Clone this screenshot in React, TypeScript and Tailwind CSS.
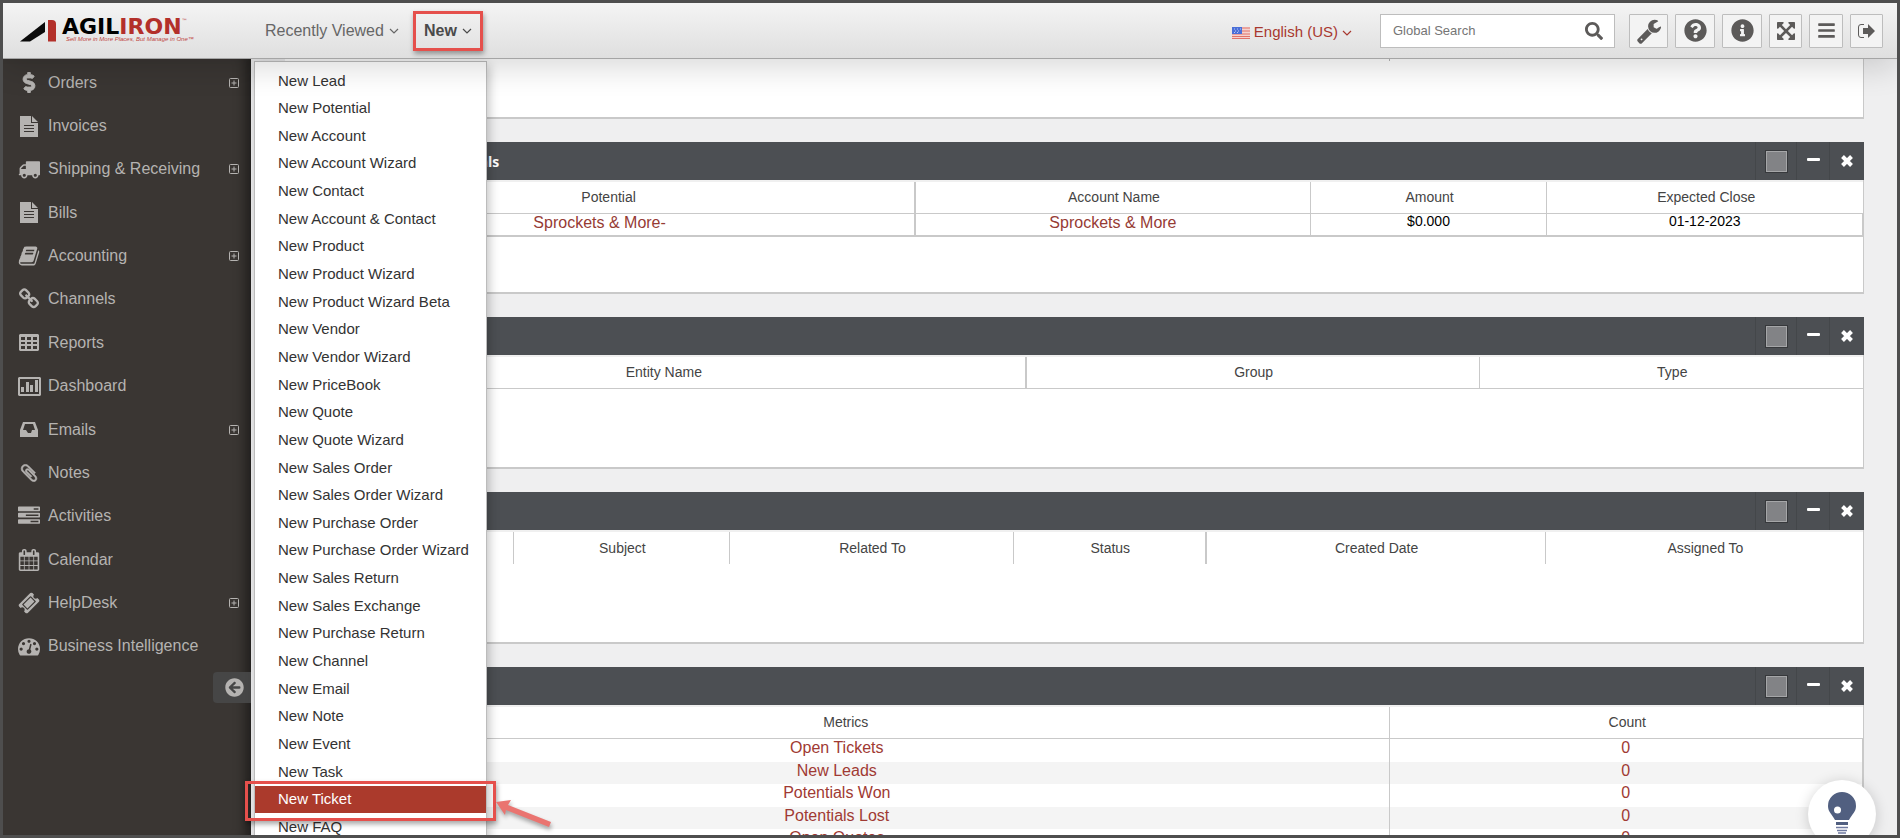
import React from 'react';
import clsx from 'clsx';
import { FaArrowCircleLeft, FaBars, FaDollarSign, FaInfoCircle, FaQuestionCircle, FaSearch } from 'react-icons/fa';

const bookPath =
  'M1703 478q40 57 18 129l-275 906q-19 64-76.5 107.5t-122.5 43.5h-923q-77 0-148.5-53.5t-99.5-131.5q-24-67-2-127 0-4 3-27t4-37q1-8-3-21.5t-3-19.5q2-11 8-21t16.5-23.5 16.5-23.5q23-38 45-91.5t30-91.5q3-10 .5-30t-.5-28q3-11 17-28t17-23q21-36 42-92t25-90q1-9-2.5-32t.5-28q4-13 22-30.5t22-22.5q19-26 42.5-84.5t27.5-96.5q1-8-3-25.5t-2-26.5q2-8 9-18t18-23 17-21q8-12 16.5-30.5t15-35 16-36 19.5-32 26.5-23.5 36-11.5 47.5 5.5l-1 3q38-9 51-9h761q74 0 114 56t18 130l-274 906q-36 119-71.5 153.5t-128.5 34.5h-869q-27 0-38 15-11 16-1 43 24 70 144 70h923q29 0 56-15.5t35-41.5l300-987q7-22 5-57 38 15 59 43zm-1064 2q-4 13 2 22.5t20 9.5h608q13 0 25.5-9.5t16.5-22.5l21-64q4-13-2-22.5t-20-9.5h-608q-13 0-25.5 9.5t-16.5 22.5zm-83 256q-4 13 2 22.5t20 9.5h608q13 0 25.5-9.5t16.5-22.5l21-64q4-13-2-22.5t-20-9.5h-608q-13 0-25.5 9.5t-16.5 22.5z';
const chainPath =
  'M1520 1216q0-40-28-68l-208-208q-28-28-68-28-42 0-72 32 3 3 19 18.5t21.5 21.5 15 19 13 25.5 3.5 27.5q0 40-28 68t-68 28q-15 0-27.5-3.5t-25.5-13-19-15-21.5-21.5-18.5-19q-33 31-33 73 0 40 28 68l206 207q27 27 68 27 40 0 68-26l147-146q28-28 28-67zm-703-705q0-40-28-68l-206-207q-28-28-68-28-39 0-68 27l-147 146q-28 28-28 67 0 40 28 68l208 208q27 27 68 27 42 0 72-31-3-3-19-18.5t-21.5-21.5-15-19-13-25.5-3.5-27.5q0-40 28-68t68-28q15 0 27.5 3.5t25.5 13 19 15 21.5 21.5 18.5 19q33-31 33-73zm895 705q0 120-85 203l-147 146q-83 83-203 83-121 0-204-85l-206-207q-83-83-83-203 0-123 88-209l-88-88q-86 88-208 88-120 0-204-84l-208-208q-84-84-84-204t85-203l147-146q83-83 203-83 121 0 204 85l206 207q83 83 83 203 0 123-88 209l88 88q86-88 208-88 120 0 204 84l208 208q84 84 84 204z';
const calendarPath =
  'M192 1664h288v-288h-288v288zm352 0h320v-288h-320v288zm-352-352h288v-320h-288v320zm352 0h320v-320h-320v320zm-352-384h288v-288h-288v288zm736 736h320v-288h-320v288zm-384-736h320v-288h-320v288zm768 736h288v-288h-288v288zm-384-352h320v-320h-320v320zm-352-864v-288q0-13-9.5-22.5t-22.5-9.5h-64q-13 0-22.5 9.5t-9.5 22.5v288q0 13 9.5 22.5t22.5 9.5h64q13 0 22.5-9.5t9.5-22.5zm736 864h288v-320h-288v320zm-384-384h320v-288h-320v288zm384 0h288v-288h-288v288zm32-480v-288q0-13-9.5-22.5t-22.5-9.5h-64q-13 0-22.5 9.5t-9.5 22.5v288q0 13 9.5 22.5t22.5 9.5h64q13 0 22.5-9.5t9.5-22.5zm384-64v1280q0 52-38 90t-90 38h-1408q-52 0-90-38t-38-90v-1280q0-52 38-90t90-38h128v-96q0-66 47-113t113-47h64q66 0 113 47t47 113v96h384v-96q0-66 47-113t113-47h64q66 0 113 47t47 113v96h128q52 0 90 38t38 90z';
const ticketPath =
  'M1024 452l316 316-572 572-316-316zm-211 979l618-618q19-19 19-45t-19-45l-362-362q-18-18-45-18t-45 18l-618 618q-19 19-19 45t19 45l362 362q18 18 45 18t45-18zm889-637l-907 908q-37 37-90.5 37t-90.5-37l-126-126q56-56 56-136t-56-136-136-56-136 56l-125-126q-37-37-37-90.5t37-90.5l907-906q37-37 90.5-37t90.5 37l125 125q-56 56-56 136t56 136 136 56 136-56l126 125q37 37 37 90.5t-37 90.5z';
const wrenchPath =
  'M448 1472q0-26-19-45t-45-19-45 19-19 45 19 45 45 19 45-19 19-45zm644-420l-682 682q-37 37-90 37-52 0-91-37l-106-108q-38-36-38-90 0-53 38-91l681-681q39 98 114.5 173.5t173.5 114.5zm634-435q0 39-23 106-47 134-164.5 217.5t-258.5 83.5q-185 0-316.5-131.5t-131.5-316.5 131.5-316.5 316.5-131.5q58 0 121.5 16.5t107.5 46.5q16 11 16 28t-16 28l-293 169v224l193 107q5-3 79-48.5t135.5-81 70.5-35.5q15 0 23.5 10t8.5 25z';
const clipPath =
  'M1596 1385q0 117-79 196t-196 79q-135 0-235-100l-777-776q-113-115-113-271 0-159 110-270t269-111q158 0 273 113l605 606q10 10 10 22 0 16-30.5 46.5t-46.5 30.5q-13 0-23-10l-606-607q-79-77-181-77-106 0-179 75t-73 181q0 105 76 181l776 777q63 63 145 63 64 0 106-42t42-106q0-82-63-145l-581-581q-26-24-60-24-29 0-48 19t-19 48q0 32 25 59l410 410q10 10 10 22 0 16-31 47t-47 31q-12 0-22-10l-410-410q-63-61-63-149 0-82 57-139t139-57q88 0 149 63l581 581q100 98 100 235z';
const gaugePath =
  'M384 1152q0-53-37.5-90.5t-90.5-37.5-90.5 37.5-37.5 90.5 37.5 90.5 90.5 37.5 90.5-37.5 37.5-90.5zm192-448q0-53-37.5-90.5t-90.5-37.5-90.5 37.5-37.5 90.5 37.5 90.5 90.5 37.5 90.5-37.5 37.5-90.5zm428 481l101-382q6-26-7.5-48.5t-38.5-29.5-48 6.5-30 39.5l-101 382q-60 5-107 43.5t-63 98.5q-20 77 20 146t117 89 146-20 89-117q16-60-6-117t-72-91zm660-33q0-53-37.5-90.5t-90.5-37.5-90.5 37.5-37.5 90.5 37.5 90.5 90.5 37.5 90.5-37.5 37.5-90.5zm-640-640q0-53-37.5-90.5t-90.5-37.5-90.5 37.5-37.5 90.5 37.5 90.5 90.5 37.5 90.5-37.5 37.5-90.5zm448 192q0-53-37.5-90.5t-90.5-37.5-90.5 37.5-37.5 90.5 37.5 90.5 90.5 37.5 90.5-37.5 37.5-90.5zm320 448q0 261-141 483-19 29-54 29h-1402q-35 0-54-29-141-221-141-483 0-182 71-348t191-286 286-191 348-71 348 71 286 191 191 286 71 348z';
const tasksPath =
  'M1024 1408h640v-128h-640v128zm-384-512h1024v-128h-1024v128zm640-512h384v-128h-384v128zm512 832v256q0 26-19 45t-45 19h-1664q-26 0-45-19t-19-45v-256q0-26 19-45t45-19h1664q26 0 45 19t19 45zm0-512v256q0 26-19 45t-45 19h-1664q-26 0-45-19t-19-45v-256q0-26 19-45t45-19h1664q26 0 45 19t19 45zm0-512v256q0 26-19 45t-45 19h-1664q-26 0-45-19t-19-45v-256q0-26 19-45t45-19h1664q26 0 45 19t19 45z';
const arrowsPath =
  'M1283 413l-355 355 355 355 144-144q29-31 70-14 39 17 39 59v448q0 26-19 45t-45 19h-448q-42 0-59-40-17-39 14-69l144-144-355-355-355 355 144 144q31 30 14 69-17 40-59 40h-448q-26 0-45-19t-19-45v-448q0-42 40-59 39-17 69 14l144 144 355-355-355-355-144 144q-19 19-45 19-12 0-24-5-40-17-40-59v-448q0-26 19-45t45-19h448q42 0 59 40 17 39-14 69l-144 144 355 355 355-355-144-144q-31-30-14-69 17-40 59-40h448q26 0 45 19t19 45v448q0 42-39 59-13 5-25 5-26 0-45-19z';
const truckPath =
  'M640 1408q0-52-38-90t-90-38-90 38-38 90 38 90 90 38 90-38 38-90zm-384-512h384v-256h-158q-13 0-22 9l-195 195q-9 9-9 22v30zm1280 512q0-52-38-90t-90-38-90 38-38 90 38 90 90 38 90-38 38-90zm256-1088v1024q0 15-4 26.5t-13.5 18.5-16.5 11.5-23.5 6-22.5 2-25.5 0-22.5-.5q0 106-75 181t-181 75-181-75-75-181h-384q0 106-75 181t-181 75-181-75-75-181h-64q-3 0-22.5.5t-25.5 0-22.5-2-23.5-6-16.5-11.5-13.5-18.5-4-26.5q0-26 19-45t45-19v-320q0-8-.5-35t0-38 2.5-34.5 6.5-37 14-30.5 22.5-30l198-198q19-19 50.5-32t58.5-13h160v-192q0-26 19-45t45-19h1024q26 0 45 19t19 45z';

function Glyph({ d, viewBox = '0 0 1792 1792', className }: { d: string; viewBox?: string; className: string }) {
  return (
    <svg viewBox={viewBox} className={className} fill="currentColor" fillRule="evenodd" aria-hidden="true">
      <path d={d} />
    </svg>
  );
}

const FileIcon = () => (
  <Glyph
    viewBox="0 0 18 21"
    className="h-[21px] w-[18px]"
    d="M0 0h11v7h7v14H0zM12 0l6 6h-6zM4 9h10v1H4zM4 12h10v1H4zM4 15h10v1H4z"
  />
);

const sidebar = [
  { label: 'Orders', icon: <FaDollarSign className="h-[21px] w-5" stroke="currentColor" strokeWidth="24" />, more: true },
  { label: 'Invoices', icon: <FileIcon /> },
  { label: 'Shipping & Receiving', icon: <Glyph d={truckPath} className="h-[22px] w-[22px]" />, more: true },
  { label: 'Bills', icon: <FileIcon /> },
  { label: 'Accounting', icon: <Glyph d={bookPath} className="h-[22px] w-[22px]" />, more: true },
  { label: 'Channels', icon: <Glyph d={chainPath} className="h-[22px] w-[22px]" /> },
  {
    label: 'Reports',
    icon: (
      <Glyph
        viewBox="0 0 20 17"
        className="h-[17px] w-5"
        d="M1 0h18l1 1v15l-1 1H1l-1-1V1zM2 3h4v3H2zM8 3h4v3H8zM14 3h4v3h-4zM2 8h4v2H2zM8 8h4v2H8zM14 8h4v2h-4zM2 12h4v3H2zM8 12h4v3H8zM14 12h4v3h-4z"
      />
    ),
  },
  {
    label: 'Dashboard',
    icon: (
      <Glyph
        viewBox="0 0 23 19"
        className="h-[19px] w-[23px]"
        d="M1 0h21l1 1v17l-1 1H1l-1-1V1zM2 2v15h19V2zM3 10h3v5H3zM8 5h3v10H8zM12 8h3v7h-3zM17 3h3v12h-3z"
      />
    ),
  },
  {
    label: 'Emails',
    icon: (
      <Glyph viewBox="0 0 18 15" className="h-[15px] w-[18px]" d="M3 0h12l3 8v7H0V8zM5 2L3 8h3l2 3h3l1-3h3l-2-6z" />
    ),
    more: true,
  },
  { label: 'Notes', icon: <Glyph d={clipPath} className="h-5 w-5 stroke-current stroke-[60]" /> },
  { label: 'Activities', icon: <Glyph d={tasksPath} className="h-[22px] w-[22px]" /> },
  { label: 'Calendar', icon: <Glyph d={calendarPath} className="h-[22px] w-[22px]" /> },
  { label: 'HelpDesk', icon: <Glyph d={ticketPath} className="h-[22px] w-[22px]" />, more: true },
  { label: 'Business Intelligence', icon: <Glyph d={gaugePath} className="h-[22px] w-[22px]" /> },
];

const newItems = [
  'New Lead',
  'New Potential',
  'New Account',
  'New Account Wizard',
  'New Contact',
  'New Account & Contact',
  'New Product',
  'New Product Wizard',
  'New Product Wizard Beta',
  'New Vendor',
  'New Vendor Wizard',
  'New PriceBook',
  'New Quote',
  'New Quote Wizard',
  'New Sales Order',
  'New Sales Order Wizard',
  'New Purchase Order',
  'New Purchase Order Wizard',
  'New Sales Return',
  'New Sales Exchange',
  'New Purchase Return',
  'New Channel',
  'New Email',
  'New Note',
  'New Event',
  'New Task',
  'New Ticket',
  'New FAQ',
];

type Column = { label: string; width: string; thick?: boolean };

const potentialColumns: Column[] = [
  { label: 'Potential', width: 'w-[40%]', thick: true },
  { label: 'Account Name', width: 'w-[25%]' },
  { label: 'Amount', width: 'w-[15%]' },
  { label: 'Expected Close', width: 'w-[20%]' },
];
const groupColumns: Column[] = [
  { label: 'Entity Name', width: 'w-[47%]', thick: true },
  { label: 'Group', width: 'w-[28.7%]' },
  { label: 'Type', width: 'w-[24.3%]' },
];
const ticketColumns: Column[] = [
  { label: '', width: 'w-[14.5%]' },
  { label: 'Subject', width: 'w-[13.7%]' },
  { label: 'Related To', width: 'w-[18%]' },
  { label: 'Status', width: 'w-[12.2%]', thick: true },
  { label: 'Created Date', width: 'w-[21.5%]' },
  { label: 'Assigned To', width: 'w-[20.1%]' },
];
const metricColumns: Column[] = [
  { label: 'Metrics', width: 'w-[70%]' },
  { label: 'Count', width: 'w-[30%]' },
];
const metrics = ['Open Tickets', 'New Leads', 'Potentials Won', 'Potentials Lost', 'Open Quotes'];

function Chevron() {
  return (
    <svg viewBox="0 0 10 6" className="h-[6px] w-[10px]" fill="none" stroke="currentColor" aria-hidden="true">
      <path d="M1 1l4 4 4-4" strokeWidth="1.2" />
    </svg>
  );
}

function Logo() {
  return (
    <a href="#home" aria-label="Agiliron" className="flex w-[196px] items-center gap-[5px]">
      <svg viewBox="0 0 37 22" className="h-[22px] w-[37px] shrink-0" aria-hidden="true">
        <path d="M0 21.500L25 2v10L10 21.500z" fill="#0b0b0b" />
        <path d="M28 0h4q4 0 4 4v17.500h-8z" fill="#b3302a" />
      </svg>
      <span className="flex flex-col">
        <span className="flex items-start font-['DejaVu_Sans',sans-serif] text-[22px] leading-[17px] font-bold text-black">
          AGIL<span className="text-[#b3302a]">IRON</span>
          <span className="text-[6px] leading-[6px] font-normal text-[#b3302a]">™</span>
        </span>
        <span className="pl-1 text-[6px] leading-[8px] whitespace-nowrap text-[#c0443d] italic">
          Sell More in More Places, But Manage in One™
        </span>
      </span>
    </a>
  );
}

function Flag() {
  return (
    <svg viewBox="0 0 18 12" className="h-3 w-[18px]" aria-hidden="true">
      <path d="M0 0h18v12H0z" fill="#f4d3cf" />
      <path d="M0 1h18M0 4h18M0 7h18M0 9.500h18M0 11.500h18" stroke="#e0736a" />
      <path d="M0 0h10v7H0z" fill="#4a6fd8" />
      <path d="M2 2h1M5 2h1M8 2h1M3 4h1M6 4h1M2 5.500h1M5 5.500h1" stroke="#b9c9f5" />
    </svg>
  );
}

function ToolButton({ label, className, children }: { label: string; className: string; children: React.ReactNode }) {
  return (
    <button
      aria-label={label}
      className={clsx(
        'flex h-[34px] items-center justify-center rounded-[1px] border border-[#bdbdbd] bg-[#f3f3f3] text-[#5c5a59]',
        className
      )}
    >
      {children}
    </button>
  );
}

function Header() {
  return (
    <header className="relative z-30 flex h-14 shrink-0 items-center border-b border-[#a5a5a5] bg-linear-to-b from-[#f4f4f4] to-[#dfdfdf] pr-[14px] pl-[17px] shadow-[0_10px_30px_rgba(0,0,0,0.14)]">
      <Logo />
      <nav className="ml-[49px] flex items-center gap-[14px] text-[16px] text-[#666]">
        <button className="flex items-center gap-[5px]">
          Recently Viewed <Chevron />
        </button>
        <button
          aria-expanded="true"
          className="flex h-10 w-[70px] items-center justify-center gap-[5px] border-[3px] border-[#e5504c] font-bold text-[#4a4a4a] shadow-[1px_3px_5px_rgba(0,0,0,0.35)]"
        >
          New <Chevron />
        </button>
      </nav>

      <button className="ml-auto flex items-center gap-1 pt-1 text-[15px] text-[#a8382f]">
        <Flag />
        English (US) <Chevron />
      </button>

      <form
        role="search"
        className="mr-[14px] ml-7 flex h-[34px] w-[235px] items-center border border-[#bdbdbd] bg-white pr-[11px] pl-3"
      >
        <input
          type="text"
          aria-label="Global Search"
          placeholder="Global Search"
          className="min-w-0 grow text-[13px] outline-none placeholder:text-[#757575]"
        />
        <button type="button" aria-label="Search" className="text-[#5c5a59]">
          <FaSearch className="h-[18px] w-[18px]" />
        </button>
      </form>

      <div className="flex items-center gap-[7px]">
        <ToolButton label="Settings" className="w-[39px]">
          <Glyph d={wrenchPath} className="h-[26px] w-[26px]" />
        </ToolButton>
        <ToolButton label="Help" className="w-10">
          <FaQuestionCircle className="h-[23px] w-[23px]" />
        </ToolButton>
        <ToolButton label="Info" className="w-10">
          <FaInfoCircle className="h-[23px] w-[23px]" />
        </ToolButton>
        <ToolButton label="Full screen" className="w-[33px]">
          <Glyph d={arrowsPath} viewBox="0 0 1536 1536" className="h-[18px] w-[18px]" />
        </ToolButton>
        <ToolButton label="Menu" className="w-[34px]">
          <FaBars className="h-[19px] w-[17px]" />
        </ToolButton>
        <ToolButton label="Sign out" className="w-[33px]">
          <svg viewBox="0 0 18 14" className="h-[14px] w-[18px]" aria-hidden="true">
            <path d="M6 .500H3Q.500.500.500 3v8q0 2.500 2.500 2.500h3" fill="none" stroke="currentColor" />
            <path d="M5 4h5V0l7 7-7 7v-4H5z" fill="currentColor" />
          </svg>
        </ToolButton>
      </div>
    </header>
  );
}

function Sidebar() {
  return (
    <aside className="flex w-[248px] shrink-0 flex-col bg-[#3a3633] text-[16px] text-[#b5b3b1] shadow-[inset_-14px_0_12px_-8px_rgba(0,0,0,0.4)]">
      <ul className="mt-[2px] flex h-[607px] shrink-0 flex-col">
        {sidebar.map((item) => (
          <li key={item.label} className="flex flex-1 items-center pr-3">
            <a href="#menu" className="flex grow items-center gap-[7px]">
              <span className="ml-[14px] flex w-6 shrink-0 justify-center">{item.icon}</span>
              {item.label}
            </a>
            {item.more && (
              <button aria-label={`Expand ${item.label}`}>
                <svg viewBox="0 0 10 10" className="h-[10px] w-[10px]" fill="none" stroke="currentColor">
                  <rect x=".5" y=".5" width="9" height="9" rx="1" />
                  <path d="M2.500 5h5M5 2.500v5" />
                </svg>
              </button>
            )}
          </li>
        ))}
      </ul>
      <button
        aria-label="Collapse sidebar"
        className="mt-1 flex h-[31px] w-[38px] items-center justify-center self-end rounded-l-[4px] bg-[#464646] pl-1"
      >
        <FaArrowCircleLeft className="h-[19px] w-[19px]" />
      </button>
    </aside>
  );
}

function NewMenu() {
  return (
    <div className="absolute top-[2px] left-[251px] z-20 w-[233px] border border-[#bcbcbc] bg-white pt-[5px] shadow-[2px_4px_10px_rgba(0,0,0,0.25)]">
      <ul className="flex h-[774px] flex-col text-[15px] text-[#333]">
        {newItems.map((item) => (
          <li key={item} className="flex flex-1">
            <a
              href="#new"
              className={clsx('flex grow items-center pl-[23px]', item === 'New Ticket' && 'bg-[#ab3a2c] text-white')}
            >
              {item}
            </a>
          </li>
        ))}
      </ul>
    </div>
  );
}

function Panel({ title, children }: { title?: string; children: React.ReactNode }) {
  return (
    <section>
      <div className="flex h-[38px] items-center bg-[#4c4f53] text-white">
        <h2 className="grow pl-12 font-['Open_Sans',sans-serif] text-[14px] font-bold">{title}</h2>
        <span className="flex h-full w-[41px] items-center justify-center border-l border-[#44474a]">
          <button
            aria-label="Panel color"
            className="h-[21px] w-[21px] border border-[#a5a6a8] bg-[#828386] outline outline-[#37393c]"
          />
        </span>
        <button
          aria-label="Minimize"
          className="flex h-full w-[33px] items-center justify-center border-l border-[#44474a]"
        >
          <svg viewBox="0 0 13 6" className="h-[6px] w-[13px]">
            <rect width="13" height="3" rx="1" fill="currentColor" />
          </svg>
        </button>
        <button aria-label="Close" className="flex h-full w-[35px] items-center justify-center border-l border-[#44474a]">
          <svg viewBox="0 0 12 12" className="h-3 w-3" stroke="currentColor" strokeWidth="4">
            <path d="M1.500 1.500l9 9M10.500 1.500l-9 9" />
          </svg>
        </button>
      </div>
      <div className="min-h-[114px] border-r border-b-2 border-[#c9c9c9] bg-white">{children}</div>
    </section>
  );
}

function Grid({ columns, line = true, children }: { columns: Column[]; line?: boolean; children?: React.ReactNode }) {
  return (
    <div className="border-t-2 border-[#f0f0f0]">
      <table className="w-full table-fixed border-separate border-spacing-0 text-center">
        <thead>
          <tr className="h-8 text-[14px] text-[#444]">
            {columns.map((col, idx) => (
              <th
                key={idx}
                className={clsx(
                  'border-[#c9c9c9] p-0 font-normal',
                  col.width,
                  idx === 0 ? 'pl-[18px]' : 'pl-[2px]',
                  line && 'border-b',
                  idx < columns.length - 1 && (col.thick ? 'border-r-2' : 'border-r')
                )}
              >
                {col.label}
              </th>
            ))}
          </tr>
        </thead>
        {children && <tbody>{children}</tbody>}
      </table>
    </div>
  );
}

function Dashboard() {
  return (
    <main className="flex grow flex-col gap-[23px] overflow-hidden bg-[#efeff0] pr-[33px] pl-[34px]">
      <div className="h-[60px] shrink-0 border-r border-b-2 border-[#c9c9c9] bg-white">
        <div className="flex h-[2px]">
          <span className="w-[70%] border-r border-[#b5b5b5]" />
        </div>
      </div>

      <Panel title="My Top Open Potentials">
        <Grid columns={potentialColumns}>
          <tr className="h-[23px] text-[14px] leading-[18px] text-black">
            <td className="border-r-2 border-b-2 border-[#c9c9c9] p-0 align-top text-[16px]">
              <a href="#potential" className="text-[#963b34]">
                Sprockets &amp; More-
              </a>
            </td>
            <td className="border-r border-b-2 border-[#c9c9c9] p-0 align-top text-[16px]">
              <a href="#account" className="text-[#963b34]">
                Sprockets &amp; More
              </a>
            </td>
            <td className="border-r border-b-2 border-[#c9c9c9] p-0 align-top leading-[15px]">$0.000</td>
            <td className="border-r border-b-2 border-[#c9c9c9] p-0 align-top leading-[15px]">01-12-2023</td>
          </tr>
        </Grid>
      </Panel>

      <Panel>
        <Grid columns={groupColumns} />
      </Panel>

      <Panel>
        <Grid columns={ticketColumns} line={false} />
      </Panel>

      <Panel>
        <Grid columns={metricColumns}>
          {metrics.map((metric, idx) => (
            <tr
              key={metric}
              className={clsx('text-[16px] leading-[18px] text-[#a03a33]', idx % 2 ? 'h-[22px] bg-[#f4f4f4]' : 'h-[23px]')}
            >
              <td className="border-r border-[#c9c9c9] p-0 align-top">
                <a href="#metric">{metric}</a>
              </td>
              <td className="border-r border-[#c9c9c9] p-0 align-top">
                <a href="#metric">0</a>
              </td>
            </tr>
          ))}
        </Grid>
      </Panel>
    </main>
  );
}

// Red frame and arrow that point at "New Ticket"
function Callout() {
  return (
    <>
      <div className="pointer-events-none absolute top-[722px] left-[242px] z-40 h-10 w-[251px] border-[3px] border-[#e5504c] shadow-[1px_3px_5px_rgba(0,0,0,0.35)]" />
      <svg
        viewBox="0 0 56 30"
        className="absolute top-[740px] left-[492px] z-40 h-[30px] w-14 drop-shadow-[1px_3px_2px_rgba(0,0,0,0.35)]"
        aria-hidden="true"
      >
        <path d="M1 3l15-2-3 5 43 17-2 5L11 11l-1 5z" fill="#ea7470" />
      </svg>
    </>
  );
}

function HintButton() {
  return (
    <button
      aria-label="Tips"
      className="absolute top-[721px] right-[21px] z-40 flex h-[68px] w-[68px] justify-center rounded-full bg-white pt-3 shadow-[0_2px_14px_rgba(0,0,0,0.18)]"
    >
      <svg viewBox="0 0 28 42" className="h-[42px] w-7" aria-hidden="true">
        <path d="M14 0a14 14 0 0 1 14 14c0 6-4 8-7 14H7C4 22 0 20 0 14A14 14 0 0 1 14 0z" fill="#515f80" />
        <circle cx="9.500" cy="18" r="3.500" fill="#fff" />
        <path d="M8 31.500h12" stroke="#515f80" strokeWidth="3" />
        <path d="M8 35.500h12M9 38.500h10M10 41h8" stroke="#6f7aa0" strokeWidth="1.500" />
      </svg>
    </button>
  );
}

export default function App() {
  return (
    <div className="flex h-screen flex-col overflow-hidden border-[3px] border-[#4e4e4e] bg-[#efeff0] font-['Liberation_Sans',Arial,sans-serif]">
      <Header />
      <div className="relative flex min-h-0 grow">
        <Sidebar />
        <Dashboard />
        <NewMenu />
        <Callout />
        <HintButton />
      </div>
    </div>
  );
}
